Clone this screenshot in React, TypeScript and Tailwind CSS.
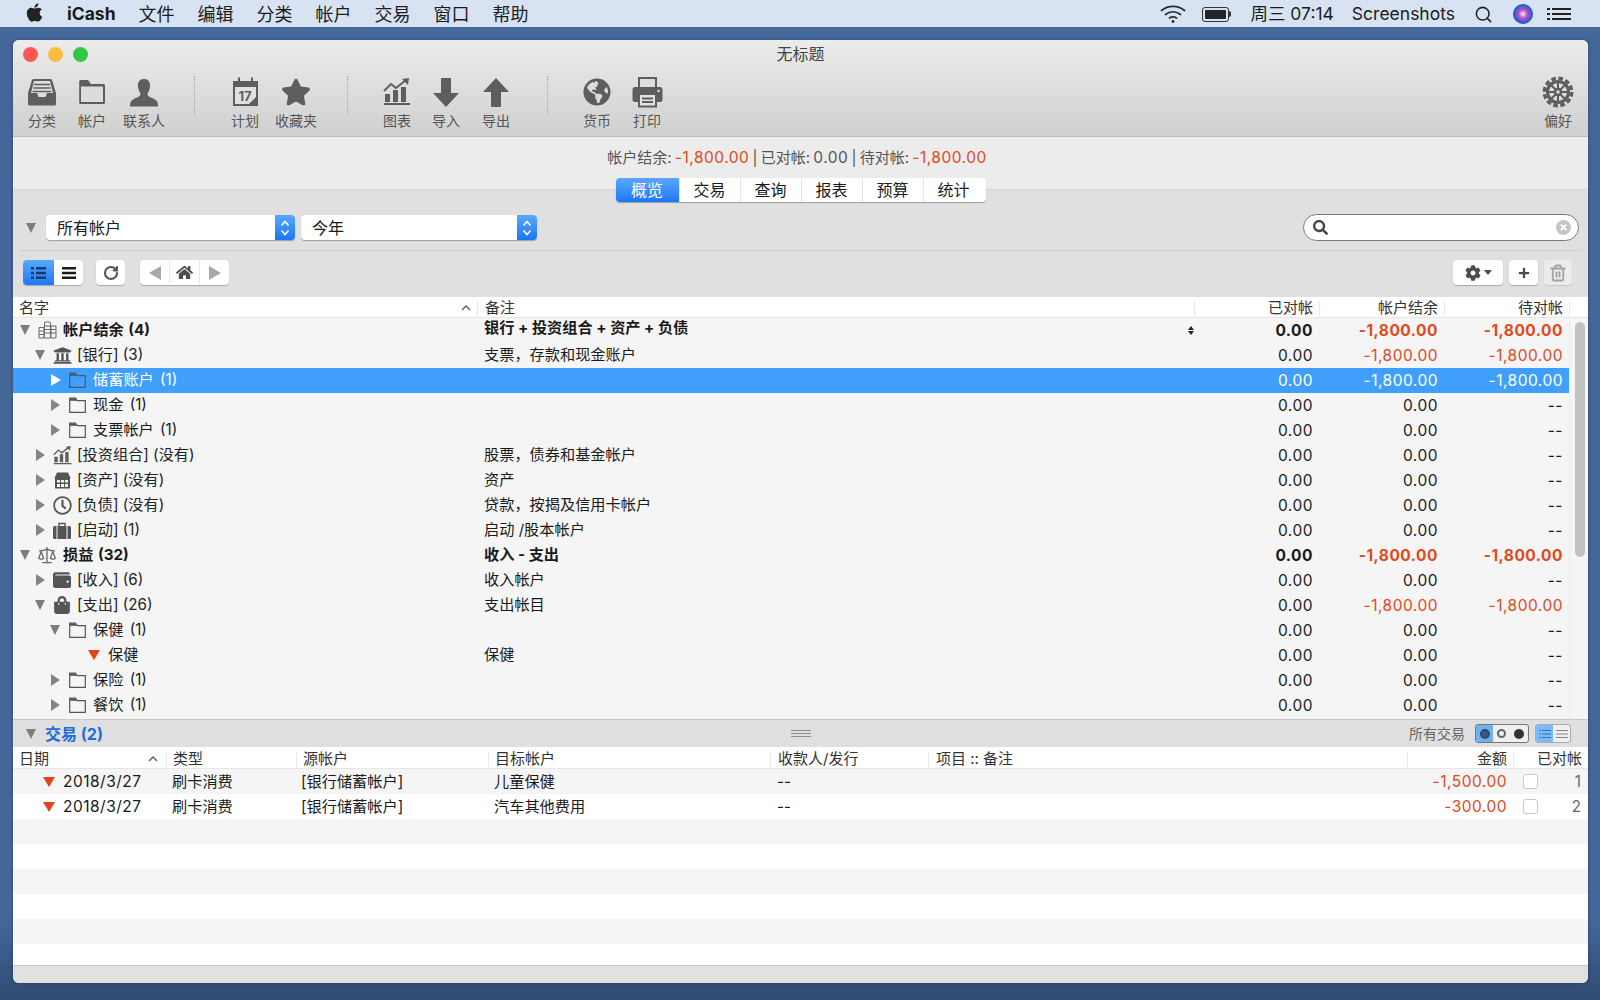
import { ReactNode } from "react";
import { RotateCw, Trash2, Scale, Search } from "lucide-react";
import {
  FaApple, FaCog, FaGlobeAmericas, FaHome, FaPlus, FaRegClock, FaSearch,
  FaShoppingBag, FaStar, FaUniversity, FaWallet,
} from "react-icons/fa";

const G = "#5e5e5e";
const num = "text-[15.5px] tracking-[0.5px]";

function InboxIcon() {
  return (
    <svg width="30" height="28" viewBox="0 0 30 28">
      <path d="M1 15 L5 2 Q5.4 1 7 1 H23 Q24.6 1 25 2 L29 15 V26 Q29 27.5 27.5 27.5 H2.5 Q1 27.5 1 26Z" fill={G} />
      <path d="M4 15 L7 3 H23 L26 15 H20 L18.5 19 H11.5 L10 15Z" fill="#dedede" />
      <path d="M7 6.5 H23 M6.4 10 H23.6 M5.6 13.5 H24.4" stroke={G} strokeWidth="1.6" />
    </svg>
  );
}

function FolderIcon() {
  return (
    <svg width="28" height="26" viewBox="0 0 28 26">
      <path d="M1.2 7 V2.5 Q1.2 1 2.7 1 H10 L13 5 H25.5 Q27 5 27 6.5 V23.5 Q27 25 25.5 25 H2.7 Q1.2 25 1.2 23.5Z" fill={G} />
      <rect x="3" y="7.5" width="22" height="15.5" fill="#dcdcdc" />
    </svg>
  );
}

function PersonIcon() {
  return (
    <svg width="30" height="29" viewBox="0 0 30 29">
      <path d="M15 1 C19.5 1 21.5 4.5 21 9 C20.7 12 19.5 14 18.5 15.5 C18.3 17.5 19.5 18.5 23 20 C27 21.5 29 23 29 28.5 H1 C1 23 3 21.5 7 20 C10.5 18.5 11.7 17.5 11.5 15.5 C10.5 14 9.3 12 9 9 C8.5 4.5 10.5 1 15 1Z" fill={G} />
    </svg>
  );
}

function CalendarIcon() {
  return (
    <svg width="27" height="30" viewBox="0 0 27 30">
      <path d="M1 4 H26 V29 H1Z" fill={G} />
      <rect x="3" y="10" width="21" height="17" fill="#e0e0e0" />
      <path d="M24 20 V27 H17Z" fill={G} />
      <rect x="6" y="0.5" width="2" height="6" fill={G} />
      <rect x="19" y="0.5" width="2" height="6" fill={G} />
      <text x="13" y="24" textAnchor="middle" fontSize="13" fontWeight="700" fill={G} fontFamily="Inter, sans-serif">17</text>
    </svg>
  );
}

function ChartIcon({ size = 28 }: { size?: number }) {
  return (
    <svg width={size} height={size} viewBox="0 0 28 28">
      <path d="M1 27 H27 V25 H1Z M2 24 V16 H7 V24Z M10 24 V12 H15 V24Z M18 24 V9 H23 V24Z" fill={G} />
      <path d="M1 13 L8 6 L13 10 L23 2" stroke={G} strokeWidth="2" fill="none" />
      <path d="M19 1 L26 0 L25 7Z" fill={G} />
    </svg>
  );
}

function ArrowIcon({ up }: { up?: boolean }) {
  return (
    <svg width="26" height="29" viewBox="0 0 26 29">
      <path d={up ? "M13 0 L26 14 H18 V29 H8 V14 H0Z" : "M13 29 L26 15 H18 V0 H8 V15 H0Z"} fill={G} />
    </svg>
  );
}

function PrinterIcon() {
  return (
    <svg width="31" height="31" viewBox="0 0 31 31">
      <path d="M7 1 H24 V11 H7Z" fill="#dedede" stroke={G} strokeWidth="2" />
      <path d="M3 10 H28 Q30.5 10 30.5 13 V23 Q30.5 25 28 25 H3 Q.5 25 .5 23 V13 Q.5 10 3 10Z" fill={G} />
      <path d="M7 17 H24 V29.5 H7Z" fill="#e4e4e4" stroke={G} strokeWidth="2" />
      <path d="M10 21.5 H21 M10 25 H21" stroke={G} strokeWidth="1.8" />
      <circle cx="26.5" cy="14" r="1.2" fill="#e4e4e4" />
    </svg>
  );
}

function GearIcon() {
  return (
    <svg width="32" height="32" viewBox="0 0 32 32" fill="none" stroke={G}>
      <circle cx="16" cy="16" r="13.6" strokeWidth="3.6" strokeDasharray="4.6 2.52" />
      <circle cx="16" cy="16" r="10.5" strokeWidth="3" />
      <circle cx="16" cy="16" r="3" strokeWidth="2.4" />
      <path d="M16 6 V12 M16 20 V26 M6 16 H12 M20 16 H26 M9 9 L13.5 13.5 M18.5 18.5 L23 23 M23 9 L18.5 13.5 M13.5 18.5 L9 23" strokeWidth="2" />
    </svg>
  );
}

function SmallFolder({ light }: { light?: boolean }) {
  const c = light ? "#4a5a6e" : "#555";
  return (
    <svg width="17" height="16" viewBox="0 0 17 16">
      <path d="M.7 15.3 V1.2 H6.5 L8 3.6 H16.3 V15.3Z" fill="none" stroke={c} strokeWidth="1.2" />
      <rect x="1" y="1.5" width="6" height="2.3" fill={c} />
    </svg>
  );
}

function StackIcon() {
  return (
    <svg width="19" height="18" viewBox="0 0 19 18">
      <path d="M1 6.5 H6 V17 H1Z M13 5 H18 V17 H13Z M6.5 1.5 Q9.5 0 12.5 1.5 V17 H6.5Z" fill="#f5f5f5" stroke="#6a6a6a" strokeWidth="1" />
      <path d="M6.5 5 H12.5 M6.5 8.5 H12.5 M6.5 12 H12.5 M1 10 H6 M1 13.5 H6 M13 8.5 H18 M13 12 H18" stroke="#6a6a6a" strokeWidth="1" />
    </svg>
  );
}

function AssetIcon() {
  return (
    <svg width="17" height="17" viewBox="0 0 17 17">
      <path d="M3 .5 H14 L16.5 6 H.5Z" fill="#555" />
      <path d="M1 6 H16 V16.5 H1Z" fill="#555" />
      <path d="M3 8 H6 V10.5 H3Z M7 8 H10 V10.5 H7Z M11 8 H14 V10.5 H11Z M3 12 H6 V15 H3Z M7 12 H10 V15 H7Z M11 12 H14 V15 H11Z" fill="#f5f5f5" />
    </svg>
  );
}

function CaseIcon() {
  return (
    <svg width="18" height="17" viewBox="0 0 18 17">
      <path d="M6 4 V1.5 H12 V4" fill="none" stroke="#555" strokeWidth="1.4" />
      <path d="M1.5 4 H16.5 Q18 4 18 5.5 V15.5 Q18 17 16.5 17 H1.5 Q0 17 0 15.5 V5.5 Q0 4 1.5 4Z" fill="#555" />
      <path d="M4 4 V17 M14 4 V17" stroke="#f5f5f5" strokeWidth="1" />
    </svg>
  );
}

function Tri({ open, light }: { open?: boolean; light?: boolean }) {
  if (light) return <span className="block w-0 h-0 border-y-[6px] border-y-transparent border-l-[10px] border-l-white ml-[1px]" />;
  if (open) return <span className="block w-0 h-0 border-x-[5px] border-x-transparent border-t-[10px] border-t-[#7d7d7d]" />;
  return <span className="block w-0 h-0 border-y-[6px] border-y-transparent border-l-[9px] border-l-[#858585] ml-[1px]" />;
}

function RedTri() {
  return <span className="block w-0 h-0 border-x-[6px] border-x-transparent border-t-[10px] border-t-[#e2431a]" />;
}

const menuItems = ["文件", "编辑", "分类", "帐户", "交易", "窗口", "帮助"];

const tools = [
  { w: "w-[50px]", label: "分类", icon: <InboxIcon /> },
  { w: "w-[50px]", label: "帐户", icon: <FolderIcon /> },
  { w: "w-[54px]", label: "联系人", icon: <PersonIcon /> },
  { w: "w-[46px]", sep: true },
  { w: "w-[56px]", label: "计划", icon: <CalendarIcon /> },
  { w: "w-[46px]", label: "收藏夹", icon: <FaStar size={30} color={G} /> },
  { w: "w-[56px]", sep: true },
  { w: "w-[44px]", label: "图表", icon: <ChartIcon /> },
  { w: "w-[54px]", label: "导入", icon: <ArrowIcon /> },
  { w: "w-[46px]", label: "导出", icon: <ArrowIcon up /> },
  { w: "w-[56px]", sep: true },
  { w: "w-[44px]", label: "货币", icon: <FaGlobeAmericas size={28} color={G} /> },
  { w: "w-[56px]", label: "打印", icon: <PrinterIcon /> },
];

const tabs = ["概览", "交易", "查询", "报表", "预算", "统计"];

type Row = {
  level: 0 | 1 | 2 | 3;
  open?: boolean;
  icon?: ReactNode;
  name: string;
  note?: string;
  bold?: boolean;
  sel?: boolean;
  bal?: string;
  pend?: string;
};

const rows: Row[] = [
  { level: 0, open: true, bold: true, icon: <StackIcon />, name: "帐户结余 (4)", note: "银行 + 投资组合 + 资产 + 负债", bal: "-1,800.00", pend: "-1,800.00" },
  { level: 1, open: true, icon: <FaUniversity size={19} color="#555" />, name: "[银行] (3)", note: "支票，存款和现金账户", bal: "-1,800.00", pend: "-1,800.00" },
  { level: 2, sel: true, name: "储蓄账户 (1)", bal: "-1,800.00", pend: "-1,800.00" },
  { level: 2, name: "现金 (1)" },
  { level: 2, name: "支票帐户 (1)" },
  { level: 1, icon: <ChartIcon size={19} />, name: "[投资组合] (没有)", note: "股票，债券和基金帐户" },
  { level: 1, icon: <AssetIcon />, name: "[资产] (没有)", note: "资产" },
  { level: 1, icon: <FaRegClock size={19} color="#555" />, name: "[负债] (没有)", note: "贷款，按揭及信用卡帐户" },
  { level: 1, icon: <CaseIcon />, name: "[启动] (1)", note: "启动 /股本帐户" },
  { level: 0, open: true, bold: true, icon: <Scale size={20} color="#666" strokeWidth={1.5} />, name: "损益 (32)", note: "收入 - 支出", bal: "-1,800.00", pend: "-1,800.00" },
  { level: 1, icon: <FaWallet size={18} color="#555" />, name: "[收入] (6)", note: "收入帐户" },
  { level: 1, open: true, icon: <FaShoppingBag size={18} color="#555" />, name: "[支出] (26)", note: "支出帐目", bal: "-1,800.00", pend: "-1,800.00" },
  { level: 2, open: true, name: "保健 (1)" },
  { level: 3, name: "保健", note: "保健" },
  { level: 2, name: "保险 (1)" },
  { level: 2, name: "餐饮 (1)" },
];

const indent = ["pl-[6px]", "pl-[21px]", "pl-[36px]", "pl-[75px]"];
const nameGap = ["ml-[5px] [word-spacing:1px]", "ml-[4px]", "ml-[5px] [word-spacing:2px]", ""];

function TreeRow({ r }: { r: Row }) {
  const txt = r.sel ? "text-white" : "text-[#1a1a1a]";
  const red = r.sel ? "text-white" : "text-[#e0491c]";
  const bold = r.bold ? "font-bold" : "";
  const top = r.note?.startsWith("银行");
  return (
    <div className={`grid grid-cols-[464px_717px_125px_125px_125px] h-[25px] items-center text-[15.2px] ${r.sel ? "bg-[#3f9ffb]" : ""} ${txt} ${bold}`}>
      <div className={`flex items-center ${indent[r.level]}`}>
        {r.level === 3 ? (
          <>
            <RedTri />
            <span className="ml-[8px]">{r.name}</span>
          </>
        ) : (
          <>
            <span className="w-[12px] flex justify-center"><Tri open={r.open} light={r.sel} /></span>
            <span className="w-[22px] ml-[5px] flex justify-center">
              {r.level === 2 ? <SmallFolder light={r.sel} /> : r.icon}
            </span>
            <span className={`${nameGap[r.level]} ${r.level === 1 ? "text-[#222]" : ""}`}>{r.name}</span>
          </>
        )}
      </div>
      <div className={`flex items-center justify-between pl-[7px] pr-[1px] ${top ? "-mt-[5px]" : ""}`}>
        <span>{r.note}</span>
        {top && (
          <span className="flex flex-col gap-[1px] mt-[5px] mr-[-1px]">
            <span className="block w-0 h-0 border-x-[3px] border-x-transparent border-b-[4px] border-b-[#222]" />
            <span className="block w-0 h-0 border-x-[3px] border-x-transparent border-t-[4px] border-t-[#222]" />
          </span>
        )}
      </div>
      <div className={`text-right pr-[6px] ${num}`}>0.00</div>
      <div className={`text-right pr-[6px] ${num} ${r.bal ? red : ""}`}>{r.bal ?? "0.00"}</div>
      <div className={`text-right pr-[6px] ${num} ${r.pend ? red : ""}`}>{r.pend ?? "--"}</div>
    </div>
  );
}

const txns = [
  { date: "2018/3/27", type: "刷卡消费", src: "[银行储蓄帐户]", dst: "儿童保健", amt: "-1,500.00", n: 1 },
  { date: "2018/3/27", type: "刷卡消费", src: "[银行储蓄帐户]", dst: "汽车其他费用", amt: "-300.00", n: 2 },
];

const txGrid = "grid grid-cols-[153px_130px_192px_282px_158px_479px_106px_75px]";

function Btn({ children, className = "" }: { children: ReactNode; className?: string }) {
  return (
    <div className={`h-[25px] bg-white rounded-[4px] shadow-[0_1px_1px_rgba(0,0,0,0.25)] flex items-center justify-center ${className}`}>
      {children}
    </div>
  );
}

function ListGlyph({ color }: { color: string }) {
  return (
    <svg width="15" height="14" viewBox="0 0 15 14" fill={color}>
      <path d="M0 1 H3 V3.5 H0Z M5 1 H15 V3.5 H5Z M0 5.7 H3 V8.2 H0Z M5 5.7 H15 V8.2 H5Z M0 10.4 H3 V12.9 H0Z M5 10.4 H15 V12.9 H5Z" />
    </svg>
  );
}

function LinesGlyph() {
  return (
    <svg width="14" height="14" viewBox="0 0 14 14" fill="#1c1c1c">
      <path d="M0 1 H14 V3.5 H0Z M0 5.7 H14 V8.2 H0Z M0 10.4 H14 V12.9 H0Z" />
    </svg>
  );
}

function Stepper() {
  return (
    <span className="w-[20px] h-full rounded-r-[4px] bg-gradient-to-b from-[#5aa8fb] to-[#1676f3] flex items-center justify-center">
      <svg width="10" height="18" viewBox="0 0 10 18" fill="none" stroke="white" strokeWidth="1.6">
        <path d="M1.5 6.5 L5 2.5 L8.5 6.5 M1.5 11.5 L5 15.5 L8.5 11.5" />
      </svg>
    </span>
  );
}

function WifiGlyph() {
  return (
    <svg width="26" height="20" viewBox="0 0 26 20" fill="none" stroke="#2c2c2c" strokeWidth="1.7" strokeLinecap="round">
      <path d="M1.5 6.5 C8 1 18 1 24.5 6.5" />
      <path d="M5.5 10.5 C10 6.8 16 6.8 20.5 10.5" />
      <path d="M9.5 14 C11.8 12.4 14.2 12.4 16.5 14" />
      <circle cx="13" cy="17.5" r="1.4" fill="#2c2c2c" stroke="none" />
    </svg>
  );
}

export default function App() {
  return (
    <div className="w-[1600px] h-[1000px] overflow-hidden bg-[linear-gradient(#44689a_0%,#44689a_92%,#2f4b73_100%)] font-[family-name:Inter,'Noto_Sans_CJK_SC',sans-serif] text-[#1a1a1a]">
      {/* menu bar */}
      <div className="h-[27px] bg-[#d7e3f3] flex items-center text-[17.5px] text-[#1c1c1c] pt-[1px]">
        <FaApple size={21} className="ml-[24px] -mt-[3px]" color="#222" />
        <span className="ml-[22px] font-bold">iCash</span>
        <div className="flex gap-[23px] ml-[23px] text-[18px]">
          {menuItems.map(m => <span key={m}>{m}</span>)}
        </div>
        <div className="ml-auto flex items-center">
          <WifiGlyph />
          <span className="ml-[16px] w-[27px] h-[15px] rounded-[3px] border border-[#333] p-[2px] flex"><span className="flex-1 bg-[#20242c] rounded-[1px]" /></span>
          <span className="w-[2px] h-[6px] bg-[#333] rounded-r" />
          <span className="ml-[19px]">周三 07:14</span>
          <span className="ml-[18px]">Screenshots</span>
          <Search size={19} className="ml-[19px]" color="#222" />
          <span className="ml-[20px] w-[20px] h-[20px] rounded-full bg-[radial-gradient(circle,#e8f0ff_0%,#c050c8_30%,#2860c8_62%,#0c1030_100%)]" />
          <svg width="24" height="14" viewBox="0 0 24 14" fill="#222" className="ml-[14px] mr-[29px]">
            <path d="M0 1 H3 V3 H0Z M5 1 H24 V3 H5Z M0 6 H3 V8 H0Z M5 6 H24 V8 H5Z M0 11 H3 V13 H0Z M5 11 H24 V13 H5Z" />
          </svg>
        </div>
      </div>

      {/* window */}
      <div className="ml-[13px] mt-[13px] w-[1575px] h-[943px] rounded-[6px] overflow-hidden flex flex-col bg-white shadow-[0_0_4px_rgba(0,0,0,0.3)]">
        <div className="h-[97px] shrink-0 bg-gradient-to-b from-[#ececec] to-[#d0d0d0] border-b border-[#bcbcbc]">
          <div className="grid grid-cols-[1fr_auto_1fr] items-center h-[28px]">
            <div className="flex gap-[10px] pl-[10px]">
              <span className="w-[15px] h-[15px] rounded-full bg-[#fc5753]" />
              <span className="w-[15px] h-[15px] rounded-full bg-[#fdbc40]" />
              <span className="w-[15px] h-[15px] rounded-full bg-[#33c748]" />
            </div>
            <span className="text-[16px] text-[#444]">无标题</span>
            <span />
          </div>
          <div className="flex pl-[4px] h-[69px] pt-[8px]">
            {tools.map((t, i) =>
              t.sep ? (
                <div key={i} className={`${t.w} flex justify-center`}>
                  <span className="h-[40px] border-l border-dotted border-[#a5a5a5]" />
                </div>
              ) : (
                <div key={i} className={`${t.w} flex flex-col items-center`}>
                  <div className="h-[32px] flex items-center justify-center">{t.icon}</div>
                  <span className="text-[14px] leading-[18px] mt-[4px] text-[#555] whitespace-nowrap">{t.label}</span>
                </div>
              )
            )}
            <div className="ml-auto w-[60px] flex flex-col items-center">
              <div className="h-[32px] flex items-center justify-center"><GearIcon /></div>
              <span className="text-[14px] leading-[18px] mt-[4px] text-[#555]">偏好</span>
            </div>
          </div>
        </div>

        {/* balance + tabs */}
        <div className="h-[53px] shrink-0 bg-[#ececec] border-b border-[#d6d6d6] flex flex-col items-center">
          <div className="text-[15px] text-[#555] mt-[11px] leading-[20px] -ml-[7px] [word-spacing:-1px]">
            帐户结余: <span className={`text-[#e0491c] ${num}`}>-1,800.00</span> | 已对帐: <span className={num}>0.00</span> | 待对帐: <span className={`text-[#e0491c] ${num}`}>-1,800.00</span>
          </div>
          <div className="flex mt-[10px] rounded-[4px] bg-white shadow-[0_1px_1px_rgba(0,0,0,0.3)] text-[16px] h-[25px] relative">
            {tabs.map((t, i) => (
              <span
                key={t}
                className={`flex items-center justify-center ${i === 0 ? "w-[63px] rounded-l-[4px] text-white bg-gradient-to-b from-[#5aa8fb] to-[#1a78f4]" : i === 5 ? "w-[63px] pr-[2px] border-l border-[#e4e4e4]" : "w-[61px] border-l border-[#e4e4e4]"}`}
              >
                {t}
              </span>
            ))}
          </div>
        </div>

        {/* filters */}
        <div className="h-[107px] shrink-0 bg-[#e0e0e0] flex flex-col">
          <div className="h-[61px] mx-[7px] border-b border-[#cfcfcf] flex items-center pt-[25px] pb-[10px]">
            <span className="ml-[6px] mr-[10px]"><Tri open /></span>
            <div className="w-[249px] h-[25px] bg-white rounded-[4px] shadow-[0_1px_1px_rgba(0,0,0,0.3)] flex items-center justify-between text-[16px]">
              <span className="pl-[11px]">所有帐户</span>
              <Stepper />
            </div>
            <div className="w-[236px] h-[25px] ml-[6px] bg-white rounded-[4px] shadow-[0_1px_1px_rgba(0,0,0,0.3)] flex items-center justify-between text-[16px]">
              <span className="pl-[11px]">今年</span>
              <Stepper />
            </div>
            <div className="ml-auto w-[276px] h-[27px] bg-white rounded-full border-[1.5px] border-[#7c7c7c] flex items-center justify-between pl-[9px] pr-[7px] mr-[2px]">
              <FaSearch size={15} color="#444" />
              <span className="w-[15px] h-[15px] rounded-full bg-[#c4c4c4] text-white text-[13px] font-bold leading-[14px] text-center">×</span>
            </div>
          </div>
          <div className="flex items-center pl-[10px] pr-[16px] mt-[9px]">
            <div className="flex h-[25px] rounded-[4px] bg-white shadow-[0_1px_1px_rgba(0,0,0,0.25)]">
              <span className="w-[31px] rounded-l-[4px] bg-gradient-to-b from-[#5aa8fb] to-[#1a78f4] flex items-center justify-center"><ListGlyph color="#123a70" /></span>
              <span className="w-[29px] flex items-center justify-center"><LinesGlyph /></span>
            </div>
            <Btn className="w-[29px] ml-[13px]"><RotateCw size={16} color="#555" strokeWidth={3.2} /></Btn>
            <Btn className="w-[89px] ml-[15px]">
              <span className="flex-1 flex justify-center"><span className="w-0 h-0 border-y-[7px] border-y-transparent border-r-[12px] border-r-[#a8a8a8]" /></span>
              <span className="flex-1 flex justify-center border-x border-[#e8e8e8] h-full items-center"><FaHome size={17} color="#4c4c4c" /></span>
              <span className="flex-1 flex justify-center"><span className="w-0 h-0 border-y-[7px] border-y-transparent border-l-[12px] border-l-[#a8a8a8]" /></span>
            </Btn>
            <Btn className="w-[50px] ml-auto gap-[3px]">
              <FaCog size={16} color="#4c4c4c" />
              <span className="w-0 h-0 border-x-[4px] border-x-transparent border-t-[5px] border-t-[#4c4c4c]" />
            </Btn>
            <Btn className="w-[29px] ml-[6px]"><FaPlus size={12} color="#4c4c4c" /></Btn>
            <div className="w-[28px] h-[25px] ml-[6px] rounded-[4px] bg-[#ebebeb] shadow-[0_1px_1px_rgba(0,0,0,0.12)] flex items-center justify-center">
              <Trash2 size={18} color="#a2a2a2" strokeWidth={2.4} />
            </div>
          </div>
        </div>

        {/* table header */}
        <div className="h-[21px] shrink-0 bg-white border-b border-[#e6e6e6] grid grid-cols-[464px_717px_125px_125px_125px_19px] items-center text-[15px] leading-[20px] text-[#333] pt-[1px]">
          <div className="flex items-center justify-between pl-[6px] pr-[6px]">
            <span>名字</span>
            <svg width="10" height="6" viewBox="0 0 10 6" fill="none" stroke="#666" strokeWidth="1.5"><path d="M1 5 L5 1 L9 5" /></svg>
          </div>
          <div className="pl-[7px] h-[15px] flex items-center border-l border-[#e8e8e8]">备注</div>
          <div className="text-right pr-[6px] h-[15px] flex items-center justify-end border-l border-[#e8e8e8]">已对帐</div>
          <div className="text-right pr-[6px] h-[15px] flex items-center justify-end border-l border-[#e8e8e8]">帐户结余</div>
          <div className="text-right pr-[6px] h-[15px] flex items-center justify-end border-l border-[#e8e8e8]">待对帐</div>
          <div className="h-[15px] border-l border-[#e8e8e8]" />
        </div>

        {/* account tree */}
        <div className="h-[401px] shrink-0 flex bg-[#f5f5f5]">
          <div className="w-[1556px]">
            {rows.map(r => <TreeRow key={r.name + r.level} r={r} />)}
          </div>
          <div className="flex-1 border-l border-[#ececec] pl-[5px] pt-[4px]">
            <div className="w-[10px] h-[235px] rounded-full bg-[#c1c1c1]" />
          </div>
        </div>

        {/* transactions bar */}
        <div className="h-[28px] shrink-0 bg-[#dfdfdf] border-t border-[#c9c9c9] grid grid-cols-[1fr_auto_1fr] items-center">
          <div className="flex items-center pl-[13px]">
            <Tri open />
            <span className="ml-[9px] text-[16px] font-bold text-[#1c6fd8]">交易 (2)</span>
          </div>
          <span className="flex flex-col gap-[2px] w-[20px]">
            <span className="h-[1px] bg-[#8c8c8c]" />
            <span className="h-[1px] bg-[#8c8c8c]" />
            <span className="h-[1px] bg-[#8c8c8c]" />
          </span>
          <div className="flex items-center justify-end pr-[17px]">
            <span className="text-[14px] text-[#666]">所有交易</span>
            <div className="ml-[10px] w-[54px] h-[19px] rounded-[3px] border border-[#777] flex items-center overflow-hidden bg-[#efefef]">
              <span className="w-[18px] h-full bg-[#6cb0f8] flex items-center justify-center"><span className="w-[10px] h-[10px] rounded-full border-2 border-[#444] bg-[#2b5c99]" /></span>
              <span className="w-[18px] h-full flex items-center justify-center"><span className="w-[9px] h-[9px] rounded-full border-2 border-[#666]" /></span>
              <span className="w-[18px] h-full flex items-center justify-center"><span className="w-[10px] h-[10px] rounded-full bg-[#333]" /></span>
            </div>
            <div className="ml-[6px] w-[36px] h-[19px] rounded-[3px] border border-[#aaa] flex overflow-hidden bg-[#efefef]">
              <span className="w-[18px] bg-[#7abcfb] flex items-center justify-center"><svg width="12" height="10" viewBox="0 0 12 10" fill="#3a6ea8"><path d="M0 1 H2 V2 H0Z M3 1 H12 V2 H3Z M0 4.5 H2 V5.5 H0Z M3 4.5 H12 V5.5 H3Z M0 8 H2 V9 H0Z M3 8 H12 V9 H3Z" /></svg></span>
              <span className="w-[18px] flex items-center justify-center"><svg width="12" height="10" viewBox="0 0 12 10" fill="#888"><path d="M0 1 H12 V2 H0Z M0 4.5 H12 V5.5 H0Z M0 8 H12 V9 H0Z" /></svg></span>
            </div>
          </div>
        </div>

        {/* transactions header */}
        <div className={`${txGrid} h-[22px] shrink-0 bg-white border-b border-[#e6e6e6] items-center text-[15px] text-[#333] pt-[1px]`}>
          <div className="flex items-center justify-between pl-[6px] pr-[8px]">
            <span>日期</span>
            <svg width="10" height="6" viewBox="0 0 10 6" fill="none" stroke="#666" strokeWidth="1.5"><path d="M1 5 L5 1 L9 5" /></svg>
          </div>
          <div className="h-[15px] flex items-center pl-[6px] border-l border-[#e8e8e8]">类型</div>
          <div className="h-[15px] flex items-center pl-[6px] border-l border-[#e8e8e8]">源帐户</div>
          <div className="h-[15px] flex items-center pl-[6px] border-l border-[#e8e8e8]">目标帐户</div>
          <div className="h-[15px] flex items-center pl-[7px] border-l border-[#e8e8e8]">收款人/发行</div>
          <div className="h-[15px] flex items-center pl-[7px] border-l border-[#e8e8e8]">项目 :: 备注</div>
          <div className="h-[15px] flex items-center justify-end pr-[6px] border-l border-[#e8e8e8]">金额</div>
          <div className="h-[15px] flex items-center justify-end pr-[6px] border-l border-[#e8e8e8]">已对帐</div>
        </div>

        {/* transaction rows */}
        <div className="flex-1 flex flex-col overflow-hidden">
          {txns.map((t, i) => (
            <div key={i} className={`${txGrid} h-[25px] shrink-0 items-center text-[15.2px] pt-[1px] ${i % 2 === 0 ? "bg-[#f5f5f5]" : "bg-white"}`}>
              <div className="flex items-center pl-[30px]">
                <RedTri />
                <span className={`ml-[8px] ${num}`}>{t.date}</span>
              </div>
              <div className="pl-[6px]">{t.type}</div>
              <div className="pl-[5px]">{t.src}</div>
              <div className="pl-[6px]">{t.dst}</div>
              <div className="pl-[7px]">--</div>
              <div />
              <div className={`text-right pr-[6px] text-[#e0491c] ${num}`}>{t.amt}</div>
              <div className="flex items-center justify-between pl-[10px] pr-[7px]">
                <span className="w-[15px] h-[15px] rounded-[3px] border border-[#c6c6c6] bg-white" />
                <span className="text-[#666]">{t.n}</span>
              </div>
            </div>
          ))}
          {[0, 1, 2, 3, 4, 5].map(i => (
            <div key={i} className={`h-[25px] shrink-0 ${i % 2 === 0 ? "bg-[#f5f5f5]" : "bg-white"}`} />
          ))}
        </div>

        {/* status bar */}
        <div className="h-[18px] shrink-0 bg-[#e1e1e1] border-t border-[#c9c9c9]" />
      </div>
    </div>
  );
}
